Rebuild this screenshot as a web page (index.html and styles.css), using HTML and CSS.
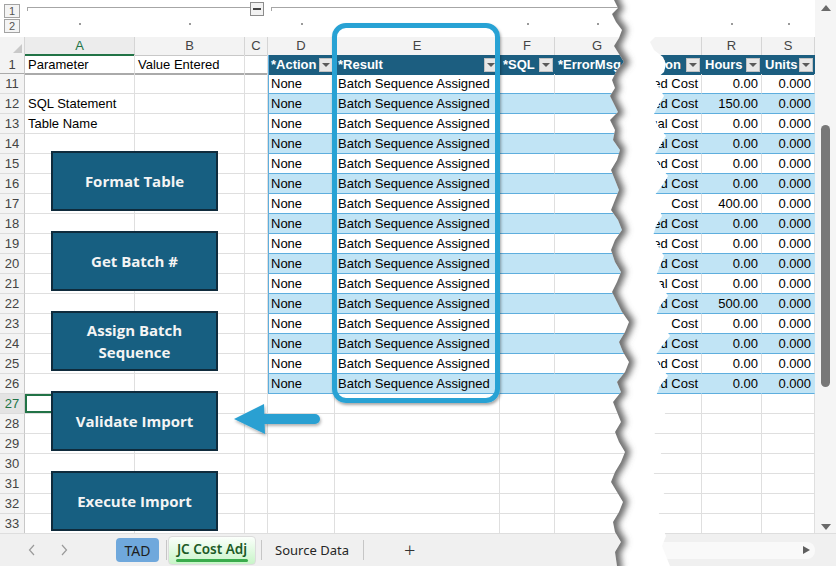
FILE: index.html
```html
<!DOCTYPE html>
<html>
<head>
<meta charset="utf-8">
<title>JC Cost Adj</title>
<link rel="stylesheet" href="styles.css">
</head>
<body>
<div class="app">
  <div class="main">
    <div class="sheet">
      <div class="cols outline">
        <div class="lvcol"><span class="lv">1</span><span class="lv">2</span></div>
        <div class="grp grp-a"><i></i></div>
        <div class="grp-btn"><b class="seg"></b><span class="minus"><em></em></span></div>
        <div class="grp grp-d"><i></i></div>
        <div class="dot c2"><i></i></div>
        <div class="dot c3"><i></i></div>
        <div class="dot c5"><i></i></div>
        <div class="dot c6"><i></i></div>
        <div class="dot c7"><i></i></div>
        <div class="dot c8"><i></i></div>
        <div class="dot c10"><i></i></div>
        <div class="dot c11"><i></i></div>
      </div>

      <div class="cols hdr">
        <div class="ch corner"><span class="tri"></span></div>
        <div class="ch chsel">A</div><div class="ch">B</div><div class="ch">C</div><div class="ch">D</div><div class="ch">E</div><div class="ch">F</div><div class="ch">G</div><div class="ch"></div><div class="ch">R</div><div class="ch">S</div>
      </div>

      <div class="cols r1">
        <div class="rh">1</div><div class="c">Parameter</div><div class="c">Value Entered</div><div class="c"></div>
        <div class="th tl"><span>*Action</span><span class="dd"></span></div>
        <div class="th"><span>*Result</span><span class="dd"></span></div>
        <div class="th"><span>*SQL</span><span class="dd"></span></div>
        <div class="th"><span>*ErrorMsg</span><span class="dd"></span></div>
        <div class="th end"><span>Description</span><span class="dd"></span></div>
        <div class="th"><span>Hours</span><span class="dd"></span></div>
        <div class="th"><span>Units</span><span class="dd"></span></div>
      </div>

      <div class="cols r"><div class="rh">11</div><div class="c"></div><div class="c"></div><div class="c"></div><div class="c t tl">None</div><div class="c t">Batch Sequence Assigned</div><div class="c t"></div><div class="c t"></div><div class="c t num"><span>Committed Cost</span></div><div class="c t num"><span>0.00</span></div><div class="c t num"><span>0.000</span></div></div>
      <div class="cols r b"><div class="rh">12</div><div class="c">SQL Statement</div><div class="c"></div><div class="c"></div><div class="c t tl">None</div><div class="c t">Batch Sequence Assigned</div><div class="c t"></div><div class="c t"></div><div class="c t num"><span>Estimated Cost</span></div><div class="c t num"><span>150.00</span></div><div class="c t num"><span>0.000</span></div></div>
      <div class="cols r"><div class="rh">13</div><div class="c">Table Name</div><div class="c"></div><div class="c"></div><div class="c t tl">None</div><div class="c t">Batch Sequence Assigned</div><div class="c t"></div><div class="c t"></div><div class="c t num"><span>Actual Cost</span></div><div class="c t num"><span>0.00</span></div><div class="c t num"><span>0.000</span></div></div>
      <div class="cols r b"><div class="rh">14</div><div class="c"></div><div class="c"></div><div class="c"></div><div class="c t tl">None</div><div class="c t">Batch Sequence Assigned</div><div class="c t"></div><div class="c t"></div><div class="c t num"><span>Actual Cost</span></div><div class="c t num"><span>0.00</span></div><div class="c t num"><span>0.000</span></div></div>
      <div class="cols r"><div class="rh">15</div><div class="c"></div><div class="c"></div><div class="c"></div><div class="c t tl">None</div><div class="c t">Batch Sequence Assigned</div><div class="c t"></div><div class="c t"></div><div class="c t num"><span>Committed Cost</span></div><div class="c t num"><span>0.00</span></div><div class="c t num"><span>0.000</span></div></div>
      <div class="cols r b"><div class="rh">16</div><div class="c"></div><div class="c"></div><div class="c"></div><div class="c t tl">None</div><div class="c t">Batch Sequence Assigned</div><div class="c t"></div><div class="c t"></div><div class="c t num"><span>Estimated Cost</span></div><div class="c t num"><span>0.00</span></div><div class="c t num"><span>0.000</span></div></div>
      <div class="cols r"><div class="rh">17</div><div class="c"></div><div class="c"></div><div class="c"></div><div class="c t tl">None</div><div class="c t">Batch Sequence Assigned</div><div class="c t"></div><div class="c t"></div><div class="c t num"><span>Cost</span></div><div class="c t num"><span>400.00</span></div><div class="c t num"><span>0.000</span></div></div>
      <div class="cols r b"><div class="rh">18</div><div class="c"></div><div class="c"></div><div class="c"></div><div class="c t tl">None</div><div class="c t">Batch Sequence Assigned</div><div class="c t"></div><div class="c t"></div><div class="c t num"><span>Committed Cost</span></div><div class="c t num"><span>0.00</span></div><div class="c t num"><span>0.000</span></div></div>
      <div class="cols r"><div class="rh">19</div><div class="c"></div><div class="c"></div><div class="c"></div><div class="c t tl">None</div><div class="c t">Batch Sequence Assigned</div><div class="c t"></div><div class="c t"></div><div class="c t num"><span>Estimated Cost</span></div><div class="c t num"><span>0.00</span></div><div class="c t num"><span>0.000</span></div></div>
      <div class="cols r b"><div class="rh">20</div><div class="c"></div><div class="c"></div><div class="c"></div><div class="c t tl">None</div><div class="c t">Batch Sequence Assigned</div><div class="c t"></div><div class="c t"></div><div class="c t num"><span>Estimated Cost</span></div><div class="c t num"><span>0.00</span></div><div class="c t num"><span>0.000</span></div></div>
      <div class="cols r"><div class="rh">21</div><div class="c"></div><div class="c"></div><div class="c"></div><div class="c t tl">None</div><div class="c t">Batch Sequence Assigned</div><div class="c t"></div><div class="c t"></div><div class="c t num"><span>Actual Cost</span></div><div class="c t num"><span>0.00</span></div><div class="c t num"><span>0.000</span></div></div>
      <div class="cols r b"><div class="rh">22</div><div class="c"></div><div class="c"></div><div class="c"></div><div class="c t tl">None</div><div class="c t">Batch Sequence Assigned</div><div class="c t"></div><div class="c t"></div><div class="c t num"><span>Estimated Cost</span></div><div class="c t num"><span>500.00</span></div><div class="c t num"><span>0.000</span></div></div>
      <div class="cols r"><div class="rh">23</div><div class="c"></div><div class="c"></div><div class="c"></div><div class="c t tl">None</div><div class="c t">Batch Sequence Assigned</div><div class="c t"></div><div class="c t"></div><div class="c t num"><span>Cost</span></div><div class="c t num"><span>0.00</span></div><div class="c t num"><span>0.000</span></div></div>
      <div class="cols r b"><div class="rh">24</div><div class="c"></div><div class="c"></div><div class="c"></div><div class="c t tl">None</div><div class="c t">Batch Sequence Assigned</div><div class="c t"></div><div class="c t"></div><div class="c t num"><span>Committed Cost</span></div><div class="c t num"><span>0.00</span></div><div class="c t num"><span>0.000</span></div></div>
      <div class="cols r"><div class="rh">25</div><div class="c"></div><div class="c"></div><div class="c"></div><div class="c t tl">None</div><div class="c t">Batch Sequence Assigned</div><div class="c t"></div><div class="c t"></div><div class="c t num"><span>Committed Cost</span></div><div class="c t num"><span>0.00</span></div><div class="c t num"><span>0.000</span></div></div>
      <div class="cols r b"><div class="rh">26</div><div class="c"></div><div class="c"></div><div class="c"></div><div class="c t tl">None</div><div class="c t">Batch Sequence Assigned</div><div class="c t"></div><div class="c t"></div><div class="c t num"><span>Estimated Cost</span></div><div class="c t num"><span>0.00</span></div><div class="c t num"><span>0.000</span></div></div>

      <div class="cols r"><div class="rh rhsel">27</div><div class="c sel"></div><div class="c"></div><div class="c"></div><div class="c"></div><div class="c"></div><div class="c"></div><div class="c"></div><div class="c"></div><div class="c"></div><div class="c"></div></div>
      <div class="cols r"><div class="rh">28</div><div class="c"></div><div class="c"></div><div class="c"></div><div class="c"></div><div class="c"></div><div class="c"></div><div class="c"></div><div class="c"></div><div class="c"></div><div class="c"></div></div>
      <div class="cols r"><div class="rh">29</div><div class="c"></div><div class="c"></div><div class="c"></div><div class="c"></div><div class="c"></div><div class="c"></div><div class="c"></div><div class="c"></div><div class="c"></div><div class="c"></div></div>
      <div class="cols r"><div class="rh">30</div><div class="c"></div><div class="c"></div><div class="c"></div><div class="c"></div><div class="c"></div><div class="c"></div><div class="c"></div><div class="c"></div><div class="c"></div><div class="c"></div></div>
      <div class="cols r"><div class="rh">31</div><div class="c"></div><div class="c"></div><div class="c"></div><div class="c"></div><div class="c"></div><div class="c"></div><div class="c"></div><div class="c"></div><div class="c"></div><div class="c"></div></div>
      <div class="cols r"><div class="rh">32</div><div class="c"></div><div class="c"></div><div class="c"></div><div class="c"></div><div class="c"></div><div class="c"></div><div class="c"></div><div class="c"></div><div class="c"></div><div class="c"></div></div>
      <div class="cols r"><div class="rh">33</div><div class="c"></div><div class="c"></div><div class="c"></div><div class="c"></div><div class="c"></div><div class="c"></div><div class="c"></div><div class="c"></div><div class="c"></div><div class="c"></div></div>

      <div class="shapes">
        <div class="btn">Format Table</div>
        <div class="btn">Get Batch #</div>
        <div class="btn">Assign Batch<br>Sequence</div>
        <div class="btn">Validate Import</div>
        <div class="btn">Execute Import</div>
      </div>

      <div class="frame"></div>

      <svg class="arrow" width="100" height="44" viewBox="0 0 100 44">
        <defs>
          <filter id="ash" x="-10%" y="-30%" width="130%" height="170%">
            <feDropShadow dx="1" dy="2" stdDeviation="1.5" flood-color="#000" flood-opacity="0.3"/>
          </filter>
        </defs>
        <g filter="url(#ash)">
          <line x1="32" y1="19" x2="85" y2="19" stroke="#2aa0d2" stroke-width="10" stroke-linecap="round"/>
          <polygon points="4,19 34,4 35,34" fill="#2aa0d2"/>
        </g>
      </svg>
    </div>

    <div class="vscroll">
      <span class="up"></span>
      <span class="thumb"></span>
      <span class="down"></span>
    </div>
  </div>

  <div class="tabbar">
    <div class="nav">
      <span class="navbtn"><svg width="8" height="12" viewBox="0 0 8 12"><polyline points="6,1 1.5,6 6,11" fill="none" stroke="#9a9a9a" stroke-width="1.2"/></svg></span>
      <span class="navbtn"><svg width="8" height="12" viewBox="0 0 8 12"><polyline points="2,1 6.5,6 2,11" fill="none" stroke="#9a9a9a" stroke-width="1.2"/></svg></span>
    </div>
    <div class="tab tad">TAD</div>
    <span class="sep s1"></span>
    <div class="tab active"><span>JC Cost Adj</span><i class="uline"></i></div>
    <span class="sep s2"></span>
    <div class="tab plain">Source Data</div>
    <span class="sep s3"></span>
    <span class="add">+</span>
    <div class="hscroll"><span class="tri-r"></span></div>
  </div>

  <svg class="tear" width="80" height="566" viewBox="0 0 80 566">
    <defs>
      <clipPath id="tc">
        <polygon points="14,0 18,8 12,14 16,22 22,30 19,38 14,46 19,54 24,62 17,70 12,80 15,88 10,96 14,104 18,112 10,120 15,130 13,140 20,150 17,160 11,170 15,180 19,190 15,200 11,210 18,220 22,230 15,240 11,250 15,262 21,272 17,282 12,292 17,302 22,312 29,322 25,332 19,342 23,352 29,362 25,372 17,382 21,392 13,402 17,412 21,422 15,432 19,442 25,452 21,462 15,472 11,482 17,492 23,502 19,512 13,522 15,532 21,542 15,552 17,566 70,566 66,556 62,546 66,536 62,526 58,516 62,506 66,496 58,486 53,476 57,466 62,456 58,446 53,436 60,426 66,416 62,406 56,396 60,386 68,376 60,366 55,356 62,346 70,336 64,326 56,316 60,306 68,296 62,286 56,276 60,266 64,256 58,246 53,236 56,226 62,216 58,206 54,196 62,186 68,176 60,166 54,156 60,146 66,136 58,126 53,116 58,106 64,96 58,86 55,80 64,72 66,64 63,57 54,50 50,42 56,36 62,26 58,16 54,6 60,0"/>
      </clipPath>
      <filter id="bl" x="-100%" y="-5%" width="300%" height="110%">
        <feGaussianBlur stdDeviation="3"/>
      </filter>
    </defs>
    <polygon fill="#ffffff" points="14,0 18,8 12,14 16,22 22,30 19,38 14,46 19,54 24,62 17,70 12,80 15,88 10,96 14,104 18,112 10,120 15,130 13,140 20,150 17,160 11,170 15,180 19,190 15,200 11,210 18,220 22,230 15,240 11,250 15,262 21,272 17,282 12,292 17,302 22,312 29,322 25,332 19,342 23,352 29,362 25,372 17,382 21,392 13,402 17,412 21,422 15,432 19,442 25,452 21,462 15,472 11,482 17,492 23,502 19,512 13,522 15,532 21,542 15,552 17,566 70,566 66,556 62,546 66,536 62,526 58,516 62,506 66,496 58,486 53,476 57,466 62,456 58,446 53,436 60,426 66,416 62,406 56,396 60,386 68,376 60,366 55,356 62,346 70,336 64,326 56,316 60,306 68,296 62,286 56,276 60,266 64,256 58,246 53,236 56,226 62,216 58,206 54,196 62,186 68,176 60,166 54,156 60,146 66,136 58,126 53,116 58,106 64,96 58,86 55,80 64,72 66,64 63,57 54,50 50,42 56,36 62,26 58,16 54,6 60,0"/>
    <g clip-path="url(#tc)">
      <polyline fill="none" stroke="#6a6a6a" stroke-width="10" filter="url(#bl)" points="14,-10 14,0 18,8 12,14 16,22 22,30 19,38 14,46 19,54 24,62 17,70 12,80 15,88 10,96 14,104 18,112 10,120 15,130 13,140 20,150 17,160 11,170 15,180 19,190 15,200 11,210 18,220 22,230 15,240 11,250 15,262 21,272 17,282 12,292 17,302 22,312 29,322 25,332 19,342 23,352 29,362 25,372 17,382 21,392 13,402 17,412 21,422 15,432 19,442 25,452 21,462 15,472 11,482 17,492 23,502 19,512 13,522 15,532 21,542 15,552 17,566 17,576"/>
    </g>
  </svg>
</div>
</body>
</html>
```

FILE: styles.css
```css
* { box-sizing: border-box; margin: 0; padding: 0; }

html, body { width: 836px; height: 566px; overflow: hidden; background: #ffffff; }

body {
  font-family: "Liberation Sans", Arial, sans-serif;
  font-size: 13px;
  color: #000;
}

.app {
  position: relative;
  width: 836px;
  height: 566px;
  display: flex;
  flex-direction: column;
}

.main { display: flex; height: 533px; }

.sheet { position: relative; width: 815px; height: 533px; overflow: hidden; }

.cols {
  display: grid;
  grid-template-columns: 25px 110px 110px 23px 67px 165px 55px 85px 62px 60px 53px;
}

/* ---------- outline (grouping) bar ---------- */
.outline { height: 37px; grid-template-rows: 16px 21px; }

.lvcol {
  grid-row: 1 / 3;
  grid-column: 1;
  display: flex;
  flex-direction: column;
  gap: 1px;
  padding: 4px 0 0 4px;
}

.lv {
  width: 16px;
  height: 14px;
  border: 1px solid #a3a3a3;
  background: #f4f4f4;
  color: #555;
  font-size: 11px;
  line-height: 12px;
  text-align: center;
}

.grp { grid-row: 1; padding-top: 7px; }
.grp i {
  display: block;
  height: 4px;
  border-top: 1px solid #a6a6a6;
  border-left: 1px solid #a6a6a6;
}
.grp-a { grid-column: 2 / 4; padding-left: 2px; }
.grp-d { grid-column: 5 / 9; padding-left: 3px; }

.grp-btn {
  grid-row: 1;
  grid-column: 4;
  display: flex;
  align-items: flex-start;
  padding-top: 2px;
}
.grp-btn .seg { width: 5px; height: 6px; border-bottom: 1px solid #a6a6a6; }
.minus {
  width: 14px;
  height: 14px;
  border: 1px solid #8c8c8c;
  background: #f2f2f2;
  display: flex;
  align-items: center;
  justify-content: center;
}
.minus em { display: block; width: 8px; height: 2px; background: #444; }

.dot { grid-row: 2; display: flex; justify-content: center; padding-top: 7px; }
.dot i { display: block; width: 2px; height: 2px; background: #9a9a9a; }
.c2 { grid-column: 2; } .c3 { grid-column: 3; } .c5 { grid-column: 5; } .c6 { grid-column: 6; }
.c7 { grid-column: 7; } .c8 { grid-column: 8; } .c10 { grid-column: 10; } .c11 { grid-column: 11; }

/* ---------- column headers ---------- */
.hdr { height: 18px; }
.ch {
  background: #f3f3f3;
  color: #444;
  text-align: center;
  line-height: 17px;
  border-right: 1px solid #d5d5d5;
  border-bottom: 1px solid #c8c8c8;
}
.chsel { color: #217346; border-bottom: 2px solid #217346; background: #ececec; }
.corner { display: flex; align-items: flex-end; justify-content: flex-end; padding: 0 2px 2px 0; }
.tri {
  width: 0; height: 0;
  border-left: 9px solid transparent;
  border-bottom: 9px solid #c9c9c9;
}

/* ---------- rows ---------- */
.r1 { height: 19px; }
.r { height: 20px; }

.rh {
  background: #f3f3f3;
  color: #444;
  text-align: center;
  border-right: 1px solid #c8c8c8;
  border-bottom: 1px solid #dcdcdc;
  line-height: 19px;
}
.r1 .rh { border-bottom: 2px solid #aaaaaa; line-height: 17px; padding-top: 1px; }
.rhsel { color: #217346; background: #e3e3e3; }

.c {
  border-right: 1px solid #dfdfdf;
  border-bottom: 1px solid #dfdfdf;
  padding: 0 3px;
  line-height: 19px;
  white-space: nowrap;
  overflow: hidden;
}
.r1 .c { border-bottom: 2px solid #aaaaaa; line-height: 17px; padding-top: 1px; }

.sel { box-shadow: inset 0 0 0 2px #217346; }

/* table */
.th {
  background: #1c5e80;
  color: #fff;
  font-weight: bold;
  display: flex;
  align-items: center;
  justify-content: space-between;
  padding: 0 2px 0 3px;
  white-space: nowrap;
  overflow: hidden;
  border-bottom: 1px solid #1c5e80;
}
.th.end { justify-content: flex-end; gap: 5px; }
.th span { flex: none; }
.dd {
  flex: none;
  width: 14px;
  height: 14px;
  background: #e8e8e8;
  border: 1px solid #c2c2c2;
  display: flex;
  align-items: center;
  justify-content: center;
}
.dd::after {
  content: "";
  width: 0; height: 0;
  border-left: 4px solid transparent;
  border-right: 4px solid transparent;
  border-top: 4px solid #5a5a5a;
}

.t { border-bottom-color: #5eaede; }
.tl { box-shadow: inset 1px 0 0 #5eaede; }
.b .t { background: #c1e4f5; border-right-color: #c1e4f5; }
.num { display: flex; justify-content: flex-end; }
.num span { flex: none; }

/* ---------- floating shapes ---------- */
.shapes {
  position: absolute;
  left: 51px;
  top: 151px;
  display: flex;
  flex-direction: column;
  gap: 20px;
}
.btn {
  width: 167px;
  height: 60px;
  background: #175f81;
  border: 2px solid #0f2b3c;
  color: #f4f4f4;
  font-family: "Open Sans", "Liberation Sans", sans-serif;
  font-weight: 700;
  font-size: 15px;
  line-height: 22px;
  text-align: center;
  display: flex;
  align-items: center;
  justify-content: center;
}

.frame {
  position: absolute;
  left: 332px;
  top: 23px;
  width: 168px;
  height: 380px;
  border: 5px solid #28a2d4;
  border-radius: 14px;
  box-shadow: 1px 2px 3px rgba(0, 0, 0, 0.35);
}

.arrow { position: absolute; left: 230px; top: 400px; }

/* ---------- vertical scrollbar ---------- */
.vscroll {
  width: 21px;
  height: 533px;
  background: #f5f5f5;
  display: flex;
  flex-direction: column;
  align-items: center;
}
.up {
  margin-top: 5px;
  width: 0; height: 0;
  border-left: 5px solid transparent;
  border-right: 5px solid transparent;
  border-bottom: 6px solid #6a6a6a;
}
.thumb {
  margin-top: 114px;
  width: 9px;
  height: 262px;
  background: #787878;
  border-radius: 5px;
}
.down {
  margin-top: auto;
  margin-bottom: 3px;
  width: 0; height: 0;
  border-left: 5px solid transparent;
  border-right: 5px solid transparent;
  border-top: 6px solid #6a6a6a;
}

/* ---------- sheet tab bar ---------- */
.tabbar {
  height: 33px;
  background: #f0f0f0;
  border-top: 1px solid #dedede;
  display: flex;
  align-items: center;
  font-family: "Noto Sans", "Liberation Sans", sans-serif;
  font-size: 13px;
  color: #222;
}
.nav { width: 116px; display: flex; padding-left: 16px; }
.navbtn { width: 32px; display: flex; justify-content: center; align-items: center; }

.tab { display: flex; align-items: center; justify-content: center; }
.tad {
  width: 43px;
  height: 24px;
  background: #6fa8dc;
  border-radius: 4px;
  font-size: 14px;
  color: #1d1d1d;
}
.sep { width: 1px; height: 20px; background: #c6c6c6; }
.s1 { margin-left: 7px; }
.s2 { margin-left: 5px; }
.s3 { margin-left: 1px; }

.active {
  position: relative;
  margin-left: 1px;
  width: 88px;
  height: 29px;
  border: 1px solid #dcdcdc;
  border-radius: 4px;
  background: linear-gradient(#fbfffb, #c8f5c8);
  flex-direction: column;
  gap: 1px;
  padding-top: 2px;
}
.active span { font-weight: 600; font-size: 13.5px; color: #1c5a26; line-height: 18px; }
.uline { display: block; width: 72px; height: 3px; border-radius: 2px; background: #3aab4c; }

.plain { width: 100px; height: 28px; font-size: 13px; color: #262626; }

.add { margin-left: 40px; font-size: 20px; font-weight: 300; color: #333; line-height: 20px; }

.hscroll {
  margin-left: auto;
  margin-right: 21px;
  width: 175px;
  height: 17px;
  background: #f9f9f9;
  border-radius: 8px;
  display: flex;
  align-items: center;
  justify-content: flex-end;
  padding-right: 5px;
}
.tri-r {
  width: 0; height: 0;
  border-top: 4px solid transparent;
  border-bottom: 4px solid transparent;
  border-left: 7px solid #5f5f5f;
}

/* torn-paper overlay */
.tear { position: absolute; left: 600px; top: 0; }
```
